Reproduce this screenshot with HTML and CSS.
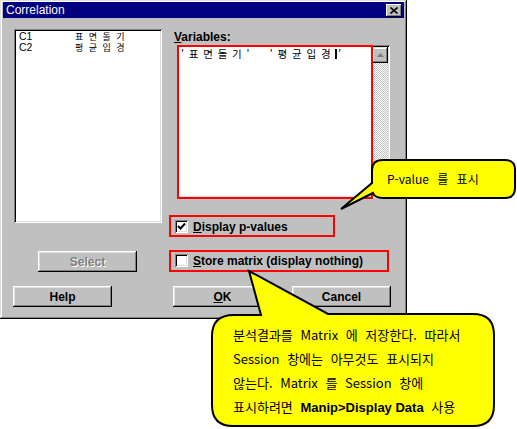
FILE: index.html
```html
<!DOCTYPE html>
<html lang="ko">
<head>
<meta charset="utf-8">
<title>Correlation</title>
<link rel="stylesheet" href="styles.css">
</head>
<body>
<div class="page">
  <div class="dialog">
    <div class="titlebar">
      <span class="title">Correlation</span>
      <span class="close">
        <svg width="8" height="7" viewBox="0 0 8 7"><path d="M0.5 0.5 L7.5 6.5 M7.5 0.5 L0.5 6.5" stroke="#000" stroke-width="1.6"/></svg>
      </span>
    </div>
    <div class="body">
      <div class="left">
        <div class="listbox">
          <div class="item"><span class="col">C1</span><span class="name">표면돌기</span></div>
          <div class="item"><span class="col">C2</span><span class="name">평균입경</span></div>
        </div>
        <div class="btn select">Select</div>
      </div>
      <div class="right">
        <div class="label"><u>V</u>ariables:</div>
        <div class="textbox">
          <div class="tb-text">'표면돌기'&nbsp;&nbsp;'평균입경<span class="caret"></span>'</div>
          <div class="scrollbar">
            <div class="sbtn"><svg width="7" height="4" viewBox="0 0 7 4"><path d="M3.5 0 L7 4 L0 4 Z" fill="#808080"/></svg></div>
            <div class="track"></div>
            <div class="sbtn"><svg width="7" height="4" viewBox="0 0 7 4"><path d="M0 0 L7 0 L3.5 4 Z" fill="#808080"/></svg></div>
          </div>
        </div>
        <div class="check-row first">
          <span class="checkbox"><svg width="9" height="9" viewBox="0 0 9 9"><path d="M1 4 L3.5 6.5 L8 1.5" fill="none" stroke="#000" stroke-width="2"/></svg></span>
          <span class="check-label"><u>D</u>isplay p-values</span>
        </div>
        <div class="check-row second">
          <span class="checkbox"></span>
          <span class="check-label"><u>S</u>tore matrix (display nothing)</span>
        </div>
      </div>
    </div>
    <div class="buttons">
      <div class="btn help">Help</div>
      <div class="btn ok"><u>O</u>K</div>
      <div class="btn cancel">Cancel</div>
    </div>
  </div>

  <div class="mark mark-vars"></div>
  <div class="mark mark-display"></div>
  <div class="mark mark-store"></div>

  <svg class="callouts" width="517" height="429" viewBox="0 0 517 429">
    <path d="M383 160 H505 Q515 160 515 170 V188 Q515 198 505 198 H383 Q375 198 373 193 L341 209 L372 183 V170 Q372 160 383 160 Z" fill="#ffff00" stroke="#000" stroke-width="2" stroke-linejoin="miter"/>
    <path d="M234 315 H261 L249 271 L328 314 H473 Q494 314 494 335 V405 Q494 426 473 426 H233 Q212 426 212 405 V336 Q212 315 234 315 Z" fill="#ffff00" stroke="#000" stroke-width="2"/>
  </svg>

  <div class="note note-small">P-value 를 표시</div>
  <div class="note note-big">
    <div>분석결과를 Matrix 에 저장한다. 따라서</div>
    <div>Session 창에는 아무것도 표시되지</div>
    <div>않는다. Matrix 를 Session 창에</div>
    <div>표시하려면 <b>Manip&gt;Display Data</b> 사용</div>
  </div>
</div>
</body>
</html>
```

FILE: styles.css
```css
html, body {
  margin: 0;
  padding: 0;
  background: #fff;
}

.page {
  position: relative;
  width: 517px;
  height: 429px;
  overflow: hidden;
  font-family: "Liberation Sans", Arial, sans-serif;
}

.dialog {
  width: 407px;
  height: 319px;
  box-sizing: border-box;
  padding: 2px 3px 0 3px;
  background: #c0c0c0;
  box-shadow: inset -1px -1px #000, inset 1px 1px #dfdfdf, inset -2px -2px #808080, inset 2px 2px #fff;
}

.titlebar {
  height: 16px;
  background: #000080;
  display: flex;
  align-items: center;
  justify-content: space-between;
  padding: 0 2px 0 3px;
}

.title {
  color: #fff;
  font-size: 12px;
  line-height: 16px;
}

.close {
  width: 16px;
  height: 13px;
  box-sizing: border-box;
  background: #c0c0c0;
  box-shadow: inset -1px -1px #000, inset 1px 1px #fff, inset -2px -2px #808080;
  display: flex;
  align-items: center;
  justify-content: center;
}

.body {
  display: grid;
  grid-template-columns: 148px 1fr;
  column-gap: 12px;
  padding: 11px 0 0 11px;
}

.left {
  display: flex;
  flex-direction: column;
}

.listbox {
  height: 194px;
  box-sizing: border-box;
  background: #fff;
  padding: 2px 0 0 5px;
  box-shadow: inset 1px 1px #808080, inset -1px -1px #fff, inset 2px 2px #000, inset -2px -2px #dfdfdf;
}

.item {
  display: flex;
  align-items: center;
  height: 11px;
  line-height: 11px;
  color: #000;
}

.col {
  width: 56px;
  font-size: 10.5px;
}

.name {
  font-family: "Noto Sans CJK KR", sans-serif;
  font-size: 9px;
  letter-spacing: 5.5px;
}

.btn {
  width: 99px;
  height: 21px;
  box-sizing: border-box;
  background: #c0c0c0;
  box-shadow: inset -1px -1px #000, inset 1px 1px #fff, inset -2px -2px #808080, inset 2px 2px #dfdfdf;
  display: flex;
  align-items: center;
  justify-content: center;
  font-weight: bold;
  font-size: 12px;
  color: #000;
}

.select {
  margin: 28px 0 0 24px;
  color: #808080;
  text-shadow: 1px 1px #fff;
}

.right {
  display: flex;
  flex-direction: column;
}

.label {
  height: 16px;
  font-size: 12px;
  font-weight: bold;
  line-height: 14px;
  padding-top: 1px;
  box-sizing: border-box;
}

.textbox {
  margin-left: 3px;
  width: 213px;
  height: 153px;
  box-sizing: border-box;
  background: #fff;
  display: flex;
  padding: 2px;
  box-shadow: inset 1px 1px #808080, inset -1px -1px #fff, inset 2px 2px #000, inset -2px -2px #dfdfdf;
}

.tb-text {
  flex: 1;
  padding: 0 0 0 2px;
  font-family: "Noto Sans CJK KR", sans-serif;
  font-size: 10.5px;
  line-height: 13px;
  letter-spacing: 4.8px;
  white-space: nowrap;
}

.caret {
  display: inline-block;
  width: 2px;
  height: 10px;
  background: #000;
  vertical-align: -1px;
  margin-right: 1px;
}

.scrollbar {
  width: 16px;
  display: flex;
  flex-direction: column;
}

.sbtn {
  height: 16px;
  box-sizing: border-box;
  background: #c0c0c0;
  box-shadow: inset -1px -1px #000, inset 1px 1px #dfdfdf, inset -2px -2px #808080, inset 2px 2px #fff;
  display: flex;
  align-items: center;
  justify-content: center;
}

.track {
  flex: 1;
  background: repeating-conic-gradient(#c0c0c0 0 25%, #fff 0 50%) 0 0 / 2px 2px;
}

.check-row {
  display: flex;
  align-items: center;
  height: 13px;
  gap: 5px;
  padding-left: 1px;
}

.check-row.first {
  margin-top: 22px;
}

.check-row.second {
  margin-top: 21px;
}

.checkbox {
  width: 13px;
  height: 13px;
  box-sizing: border-box;
  background: #fff;
  box-shadow: inset 1px 1px #808080, inset -1px -1px #fff, inset 2px 2px #000, inset -2px -2px #dfdfdf;
  display: flex;
  align-items: center;
  justify-content: center;
}

.check-label {
  font-size: 12px;
  font-weight: bold;
  white-space: nowrap;
}

.buttons {
  display: flex;
  margin-top: 14px;
  padding-left: 10px;
}

.ok {
  margin-left: 61px;
}

.cancel {
  margin-left: 20px;
}

/* annotation overlays */
.mark {
  position: absolute;
  box-sizing: border-box;
  border: 2px solid #ff0000;
}

.mark-vars {
  left: 177px;
  top: 45px;
  width: 196px;
  height: 154px;
}

.mark-display {
  left: 169px;
  top: 215px;
  width: 166px;
  height: 22px;
}

.mark-store {
  left: 169px;
  top: 250px;
  width: 220px;
  height: 22px;
}

.callouts {
  position: absolute;
  left: 0;
  top: 0;
}

.note {
  position: absolute;
  font-family: "Noto Sans CJK KR", sans-serif;
  color: #000;
  white-space: nowrap;
}

.note-small {
  left: 387px;
  top: 171px;
  font-size: 12px;
  line-height: 16px;
  word-spacing: 5px;
}

.note-big {
  left: 233px;
  top: 323px;
  font-size: 13px;
  line-height: 24px;
  word-spacing: 4px;
}

.note-big b {
  font-family: "Liberation Sans", Arial, sans-serif;
  font-weight: bold;
  word-spacing: 0;
}
```
